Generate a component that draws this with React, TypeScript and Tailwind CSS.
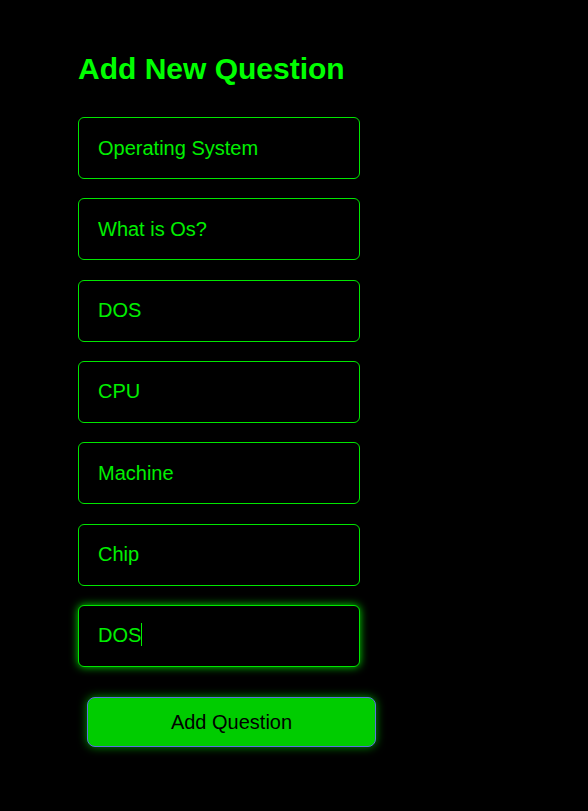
const fields = ["Operating System", "What is Os?", "DOS", "CPU", "Machine", "Chip"];

export default function App() {
  return (
    <div className="min-h-[811px] bg-black pl-[78px] pt-[52px] font-['Liberation_Sans',Arial,sans-serif]">
      <h1 className="text-[30px] leading-[34px] font-bold text-[#00ff00]">Add New Question</h1>

      <form className="mt-[31px] flex w-[282px] flex-col gap-[19.33px]" onSubmit={(e) => e.preventDefault()}>
        {fields.map((value) => (
          <input
            key={value}
            defaultValue={value}
            className="h-[62px] w-full rounded-[6px] border border-[#00e600] bg-black px-[19px] text-[20px] text-[#00f000] outline-none"
          />
        ))}

        {/* focused field */}
        <div className="flex h-[62px] w-full items-center rounded-[6px] border border-[#00e600] bg-black px-[19px] pb-[2px] text-[20px] text-[#00f000] shadow-[0_0_8px_#00dd00]">
          <span>DOS</span>
          <span className="h-[23px] w-px bg-[#00f000]" />
        </div>
      </form>

      <button className="mt-[30px] ml-[9px] h-[50px] w-[289px] rounded-[8px] border-[1.5px] border-[#5b6fe0] bg-[#00cc00] text-[20px] text-black shadow-[0_0_10px_#009900]">
        Add Question
      </button>
    </div>
  );
}
